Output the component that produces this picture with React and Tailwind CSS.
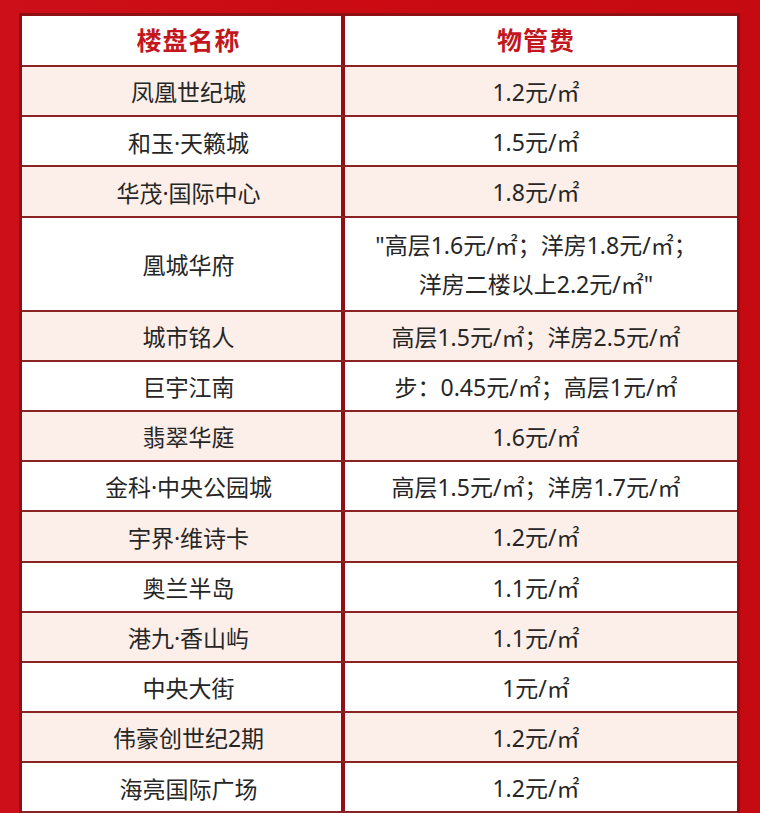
const ROWS = [
  { name: "凤凰世纪城", fee: ["1.2元/㎡"] },
  { name: "和玉·天籁城", fee: ["1.5元/㎡"] },
  { name: "华茂·国际中心", fee: ["1.8元/㎡"] },
  { name: "凰城华府", fee: ["\"高层1.6元/㎡；洋房1.8元/㎡；", "洋房二楼以上2.2元/㎡\""] },
  { name: "城市铭人", fee: ["高层1.5元/㎡；洋房2.5元/㎡"] },
  { name: "巨宇江南", fee: ["步：0.45元/㎡；高层1元/㎡"] },
  { name: "翡翠华庭", fee: ["1.6元/㎡"] },
  { name: "金科·中央公园城", fee: ["高层1.5元/㎡；洋房1.7元/㎡"] },
  { name: "宇界·维诗卡", fee: ["1.2元/㎡"] },
  { name: "奥兰半岛", fee: ["1.1元/㎡"] },
  { name: "港九·香山屿", fee: ["1.1元/㎡"] },
  { name: "中央大街", fee: ["1元/㎡"] },
  { name: "伟豪创世纪2期", fee: ["1.2元/㎡"] },
  { name: "海亮国际广场", fee: ["1.2元/㎡"] },
];

const FONT = { fontFamily: '"Noto Sans", "Noto Sans CJK SC", sans-serif' };

const App = () => {
  return (
    <div className="w-[760px] h-[813px] overflow-hidden bg-gradient-to-r from-[#cc0f19] via-[#cb0a12] to-[#c60a12] pt-[13px] pl-[19px] pr-[20px]" style={FONT}>
      <div className="border-x-[3px] border-t-[3px] border-[#8e0f14] bg-white">
        {/* header */}
        <div className="flex h-[51px] border-b-2 border-[#8a2424]">
          <div className="w-[319px] flex items-center justify-center pl-[14px] text-[25px] font-bold text-[#c3161d] tracking-[1px]">
            楼盘名称
          </div>
          <div className="w-[4px] bg-[#8e1016]" />
          <div className="flex-1 flex items-center justify-center pr-[10px] text-[25px] font-bold text-[#c3161d] tracking-[1px]">
            物管费
          </div>
        </div>

        {ROWS.map((row, i) => (
          <div
            key={row.name}
            className={
              "flex border-b-2 border-[#8a2424] text-[23px] text-[#262626] " +
              (row.fee.length > 1 ? "h-[94px] " : "h-[50.2px] ") +
              (i % 2 === 0 ? "bg-[#fcefe9]" : "bg-white")
            }
          >
            <div className="w-[319px] flex items-center justify-center pl-[14px] pt-[3px]">
              {row.name}
            </div>
            <div className="w-[4px] bg-[#8e1016]" />
            <div className="flex-1 flex flex-col items-center justify-center pr-[10px] pt-[3px] leading-[39px]">
              {row.fee.map((line) => (
                <div key={line}>{line}</div>
              ))}
            </div>
          </div>
        ))}
      </div>
    </div>
  );
};

export default App;
